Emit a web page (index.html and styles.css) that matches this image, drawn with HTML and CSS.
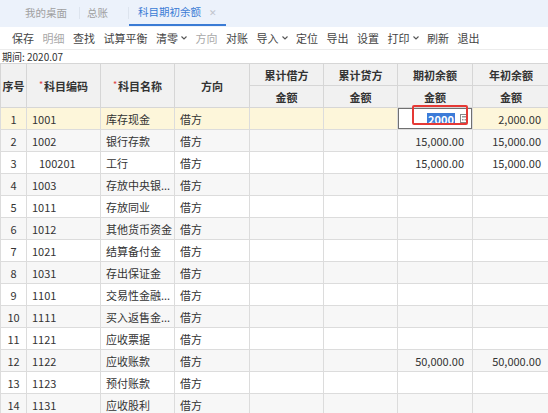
FILE: index.html
```html
<!DOCTYPE html>
<html>
<head>
<meta charset="utf-8">
<link rel="stylesheet" href="styles.css">
</head>
<body>
<div class="tabs">
  <div class="tab tab-first">我的桌面</div>
  <div class="tab tab-second">总账</div>
  <div class="tab tab-active">科目期初余额<span class="close">✕</span></div>
</div>
<div class="toolbar">
  <span class="tb">保存</span>
  <span class="tb off">明细</span>
  <span class="tb">查找</span>
  <span class="tb">试算平衡</span>
  <span class="tb">清零<svg class="chev" viewBox="0 0 6 4"><path d="M0.5 0.5 L3 3 L5.5 0.5" fill="none" stroke="#555" stroke-width="1.1"/></svg></span>
  <span class="tb off">方向</span>
  <span class="tb">对账</span>
  <span class="tb">导入<svg class="chev" viewBox="0 0 6 4"><path d="M0.5 0.5 L3 3 L5.5 0.5" fill="none" stroke="#555" stroke-width="1.1"/></svg></span>
  <span class="tb">定位</span>
  <span class="tb">导出</span>
  <span class="tb">设置</span>
  <span class="tb">打印<svg class="chev" viewBox="0 0 6 4"><path d="M0.5 0.5 L3 3 L5.5 0.5" fill="none" stroke="#555" stroke-width="1.1"/></svg></span>
  <span class="tb">刷新</span>
  <span class="tb">退出</span>
</div>
<div class="period">期间: 2020.07</div>
<table class="grid">
  <colgroup>
    <col class="c-no"><col class="c-code"><col class="c-name"><col class="c-dir">
    <col class="c-amt"><col class="c-amt"><col class="c-amt2"><col class="c-amt3">
  </colgroup>
  <thead>
    <tr class="h1">
      <th rowspan="2">序号</th>
      <th rowspan="2"><span class="req">*</span>科目编码</th>
      <th rowspan="2"><span class="req">*</span>科目名称</th>
      <th rowspan="2">方向</th>
      <th>累计借方</th>
      <th>累计贷方</th>
      <th>期初余额</th>
      <th>年初余额</th>
    </tr>
    <tr class="h2">
      <th>金额</th><th>金额</th><th>金额</th><th>金额</th>
    </tr>
  </thead>
  <tbody>
    <tr class="sel">
      <td class="no">1</td><td>1001</td><td>库存现金</td><td>借方</td><td></td><td></td>
      <td class="edit"><div class="editbox"><span class="seltext">2000</span><svg class="calc" viewBox="0 0 8 9"><rect x="0.5" y="0.5" width="7" height="8" fill="#fff" stroke="#888"/><rect x="2" y="2" width="4" height="1.5" fill="#999"/><rect x="2" y="5" width="1.5" height="1.5" fill="#999"/><rect x="4.5" y="5" width="1.5" height="1.5" fill="#999"/></svg></div><div class="mark"></div></td>
      <td class="num">2,000.00</td>
    </tr>
    <tr><td class="no">2</td><td>1002</td><td>银行存款</td><td>借方</td><td></td><td></td><td class="num">15,000.00</td><td class="num">15,000.00</td></tr>
    <tr><td class="no">3</td><td class="sub">100201</td><td>工行</td><td>借方</td><td></td><td></td><td class="num">15,000.00</td><td class="num">15,000.00</td></tr>
    <tr><td class="no">4</td><td>1003</td><td>存放中央银...</td><td>借方</td><td></td><td></td><td></td><td></td></tr>
    <tr><td class="no">5</td><td>1011</td><td>存放同业</td><td>借方</td><td></td><td></td><td></td><td></td></tr>
    <tr><td class="no">6</td><td>1012</td><td>其他货币资金</td><td>借方</td><td></td><td></td><td></td><td></td></tr>
    <tr><td class="no">7</td><td>1021</td><td>结算备付金</td><td>借方</td><td></td><td></td><td></td><td></td></tr>
    <tr><td class="no">8</td><td>1031</td><td>存出保证金</td><td>借方</td><td></td><td></td><td></td><td></td></tr>
    <tr><td class="no">9</td><td>1101</td><td>交易性金融...</td><td>借方</td><td></td><td></td><td></td><td></td></tr>
    <tr><td class="no">10</td><td>1111</td><td>买入返售金...</td><td>借方</td><td></td><td></td><td></td><td></td></tr>
    <tr><td class="no">11</td><td>1121</td><td>应收票据</td><td>借方</td><td></td><td></td><td></td><td></td></tr>
    <tr><td class="no">12</td><td>1122</td><td>应收账款</td><td>借方</td><td></td><td></td><td class="num">50,000.00</td><td class="num">50,000.00</td></tr>
    <tr><td class="no">13</td><td>1123</td><td>预付账款</td><td>借方</td><td></td><td></td><td></td><td></td></tr>
    <tr><td class="no">14</td><td>1131</td><td>应收股利</td><td>借方</td><td></td><td></td><td></td><td></td></tr>
  </tbody>
</table>
</body>
</html>
```
FILE: styles.css
```css
html, body {
  margin: 0;
  padding: 0;
  background: #fff;
  overflow: hidden;
}
body {
  font-family: "Noto Sans CJK SC", "Liberation Sans", sans-serif;
  font-size: 11px;
  color: #333;
  width: 548px;
  height: 413px;
}
.tabs {
  height: 27px;
  background: #ecf2fb;
  display: flex;
  align-items: stretch;
  box-sizing: border-box;
}
.tab {
  display: flex;
  align-items: center;
  color: #a0a0a0;
  font-size: 10.5px;
  line-height: 1;
}
.tab-first {
  margin-left: 25px;
  padding-right: 12px;
  border-right: 1px solid #dde4ee;
  margin-top: 7px;
  margin-bottom: 8px;
}
.tab-second {
  padding-left: 7px;
  padding-right: 20px;
  border-right: 1px solid #dde4ee;
  margin-top: 7px;
  margin-bottom: 8px;
}
.tab-active {
  color: #3a7bd5;
  margin-left: 0;
  padding: 1px 9px 0 9px;
  border-bottom: 2px solid #3a7bd5;
  margin-bottom: 1px;
}
.close {
  color: #c0c4cc;
  font-size: 9px;
  margin-left: 8px;
}
.toolbar {
  height: 22px;
  display: flex;
  align-items: center;
  padding-left: 12px;
  gap: 8.5px;
  border-bottom: 1px solid #ececec;
}
.tb {
  color: #444;
  font-size: 11px;
  line-height: 1;
  display: inline-flex;
  align-items: center;
  white-space: nowrap;
}
.tb.off {
  color: #a8a8a8;
}
.chev {
  width: 6px;
  height: 4px;
  margin-left: 3px;
}
.period {
  height: 12px;
  line-height: 13px;
  font-size: 10px;
  padding-left: 2px;
  color: #333;
}
.grid {
  border-collapse: collapse;
  table-layout: fixed;
  width: 549px;
  margin-top: 1px;
}
.c-no { width: 26px; }
.c-code { width: 74px; }
.c-name { width: 74px; }
.c-dir { width: 75px; }
.c-amt { width: 74px; }
.c-amt2 { width: 75px; }
.c-amt3 { width: 77px; }
.grid th {
  background: #f1f1f1;
  border: 1px solid #d6d6d6;
  font-weight: bold;
  font-size: 11px;
  color: #333;
  padding: 0;
  text-align: center;
}
.grid tr.h1 th { height: 21px; }
.grid tr.h2 th { height: 21px; }
.req {
  color: #e04040;
  font-weight: normal;
  font-size: 9px;
  vertical-align: top;
  margin-right: 1px;
}
.grid td {
  border: 1px solid #dcdcdc;
  height: 21px;
  padding: 0 0 0 5px;
  white-space: nowrap;
  overflow: hidden;
  font-size: 11px;
  color: #333;
}
.grid tbody tr:nth-child(even) td {
  background: #f7f7f7;
}
.grid tbody tr.sel td {
  background: #fdf6da;
}
.grid td.no {
  text-align: center;
  padding: 0;
}
.grid td.sub {
  padding-left: 12px;
}
.grid td.num {
  text-align: right;
  padding: 0 8px 0 0;
}
.grid td.edit {
  position: relative;
  padding: 0;
  overflow: visible;
}
.editbox {
  box-sizing: border-box;
  height: 21px;
  border: 1px solid #707070;
  background: #fff;
  display: flex;
  align-items: center;
  justify-content: flex-end;
  padding-right: 3px;
}
.seltext {
  background: #3c7bd8;
  color: #fff;
  font-weight: bold;
  line-height: 12px;
  padding: 0 1px;
}
.calc {
  width: 8px;
  height: 9px;
  margin-left: 5px;
}
.mark {
  position: absolute;
  left: 14px;
  top: -3px;
  width: 52px;
  height: 16px;
  border: 2px solid #e53935;
  border-radius: 2px;
}
```
